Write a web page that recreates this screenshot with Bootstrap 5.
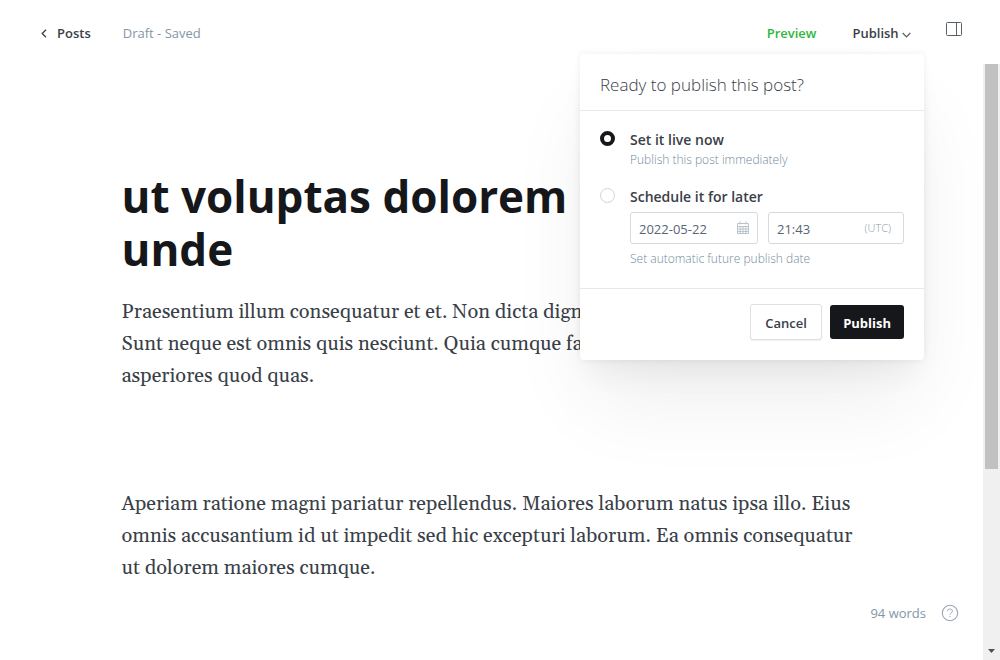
<!DOCTYPE html>
<html lang="en">
<head>
<meta charset="utf-8">
<meta name="viewport" content="width=device-width, initial-scale=1">
<title>Post editor</title>
<link rel="stylesheet" href="https://cdn.jsdelivr.net/npm/bootstrap@5.3.0/dist/css/bootstrap.min.css">
<style>
:root { --ink: #15171a; --text: #394047; --muted: #8496a7; --line: #e5e9ed; }
body { font-family: "Open Sans", "Noto Sans", sans-serif; font-size: 13px; line-height: 20px; color: var(--text); background: #fff; }
.editor-head { height: 64px; padding: 2px 38px 0 41px; }
.editor-head > a, .publish-toggle { font-size: 13px; line-height: 20px; font-weight: 600; color: var(--text); text-decoration: none; border: 0; }
.editor-head > .preview-link { color: #2db83d; }
.muted-text { color: var(--muted); }
.back-icon { width: 6px; height: 9px; }
.back-link { gap: 10px; }
.draft-state { margin-left: 32px; }
.publish-toggle { padding: 4px 13px 4px 36px; }
.sidebar-toggle { padding: 0 0 9px 22px; line-height: 0; border: 0; }
.publish-menu { top: 35px; right: 0; width: 344px; z-index: 10; padding: 0; border: 0; border-radius: 4px; color: var(--text);
  box-shadow: 0 0 7px rgba(0,0,0,.07), 0 20px 28px -8px rgba(0,0,0,.05), 0 50px 80px -10px rgba(0,0,0,.07); }
.menu-title { font-size: 17px; line-height: 24px; font-weight: 300; padding: 19px 20px 13px; margin: 0; border-bottom: 1px solid var(--line); }
.menu-body { padding: 18px 20px 19px; }
.menu-foot { padding: 15px 20px 20px; border-top: 1px solid var(--line); }
.option { gap: 15px; }
.option input[type=radio] { appearance: none; flex: none; width: 15px; height: 15px; margin: 2px 0 0; border: 1px solid #ced4da; border-radius: 50%; background: #fff; }
.option input[type=radio]:checked { border: 4px solid var(--ink); }
.option label { font-size: 14px; line-height: 21px; font-weight: 600; display: block; }
.hint { font-size: 12px; font-weight: 300; color: #738a9c; }
.schedule { margin: 5px 0; gap: 10px; }
.field-box { height: 32px; border: 1px solid #d5dade; border-radius: 3px; padding: 0 8px; }
.field-date { width: 128px; }
.field-time { flex: 1; }
.field-box input { width: 100%; min-width: 0; border: 0; padding: 2px 0 0; font-size: 13px; color: #586574; outline: 0; background: transparent; }
.zone { font-size: 11px; font-weight: 300; color: #8f9ba7; margin: 0 4px; }
.menu-foot .btn { font-size: 13px; line-height: 20px; font-weight: 600; border-radius: 3px; }
.menu-foot .btn-cancel { height: 36px; min-width: 72px; padding: 1px 14px 0; border: 1px solid #dde1e5; color: var(--text); background: #fff; box-shadow: 0 1px 1px rgba(0,0,0,.06); }
.menu-foot .btn-publish { height: 34px; padding: 1px 13px 0; border: 0; color: #fff; background: var(--ink); font-weight: 700; }
.canvas-col { padding: 106px 40px 0; min-width: 0; }
.post { max-width: 740px; margin: 0 auto; }
.post h1 { font-size: 44px; line-height: 53px; font-weight: 700; color: var(--ink); margin: 0 0 20px; }
.post p { font-family: Gelasio, "Liberation Serif", serif; font-size: 20px; line-height: 32px; margin: 0 0 96px; }
.status { right: 24px; bottom: 37px; gap: 15px; }
.scroll-track { width: 17px; background: #f0f0f0; }
.scroll-thumb { width: 13px; height: 68%; background: #c1c1c1; }
.scroll-arrow { width: 7px; height: 4px; margin-bottom: 7px; }
</style>
</head>
<body class="vh-100 d-flex flex-column overflow-hidden">
<header class="editor-head d-flex align-items-center flex-shrink-0">
  <a href="#" class="back-link d-flex align-items-center"><svg class="back-icon" viewBox="0 0 6 9" fill="none" stroke="#394047" stroke-width="1.3"><path d="M5 .7 1.2 4.5 5 8.3"/></svg>Posts</a>
  <span class="draft-state muted-text">Draft - Saved</span>
  <a href="#" class="preview-link ms-auto">Preview</a>
  <div class="position-relative">
    <button type="button" class="btn publish-toggle" aria-expanded="true">Publish <svg width="9" height="6" viewBox="0 0 9 6" fill="none" stroke="#596066" stroke-width="1.2"><path d="M.7 1 4.5 4.9 8.3 1"/></svg></button>
    <form class="publish-menu card position-absolute">
      <h2 class="menu-title">Ready to publish this post?</h2>
      <div class="menu-body">
        <div class="option d-flex mb-3">
          <input type="radio" name="when" id="now" checked>
          <div><label for="now">Set it live now</label><div class="hint">Publish this post immediately</div></div>
        </div>
        <div class="option d-flex">
          <input type="radio" name="when" id="later">
          <div class="flex-grow-1">
            <label for="later">Schedule it for later</label>
            <div class="schedule d-flex">
              <div class="field-box field-date d-flex align-items-center">
                <input type="text" value="2022-05-22" aria-label="Publish date">
                <svg class="flex-shrink-0" width="12" height="14" viewBox="0 0 12 14" fill="none" stroke="#b9c4ce"><path d="M.5 2.5h11v10H.5zM.5 5.5h11M.5 8h11M.5 10.5h11M3.2 5v8M6 5v8M8.8 5v8M3 .5v3M9 .5v3"/></svg>
              </div>
              <div class="field-box field-time d-flex align-items-center">
                <input type="text" value="21:43" aria-label="Publish time"><span class="zone">(UTC)</span>
              </div>
            </div>
            <div class="hint">Set automatic future publish date</div>
          </div>
        </div>
      </div>
      <div class="menu-foot d-flex justify-content-end align-items-center gap-2">
        <button type="button" class="btn btn-cancel">Cancel</button>
        <button type="submit" class="btn btn-publish">Publish</button>
      </div>
    </form>
  </div>
  <button type="button" class="btn sidebar-toggle" aria-label="Settings"><svg width="16" height="14" viewBox="0 0 16 14" fill="none" stroke="#596066"><rect x=".5" y=".5" width="15" height="13" rx="1"/><path d="M10.5.5v13M12.5.5"/></svg></button>
</header>
<div class="d-flex flex-grow-1 overflow-hidden">
  <main class="canvas-col flex-grow-1 position-relative">
    <article class="post">
      <h1>ut voluptas dolorem inventore unde</h1>
      <p>Praesentium illum consequatur et et. Non dicta dignissimos perspiciatis nostrum. Sunt neque est omnis quis nesciunt. Quia cumque facere voluptatem dolorum asperiores quod quas.</p>
      <p>Aperiam ratione magni pariatur repellendus. Maiores laborum natus ipsa illo. Eius omnis accusantium id ut impedit sed hic excepturi laborum. Ea omnis consequatur ut dolorem maiores cumque.</p>
    </article>
    <div class="status position-absolute d-flex align-items-center muted-text">
      <span>94 words</span>
      <a href="#" class="d-flex" aria-label="Help"><svg width="18" height="18" viewBox="0 0 18 18" fill="none" stroke="#9aa7b5"><circle cx="9" cy="9" r="7.7" stroke-width="1.1"/><path d="M6.6 7.2C6.6 5.8 7.6 5 9 5s2.4.9 2.4 2.1C11.4 8.8 9 8.8 9 10.7M9 12v1.2"/></svg></a>
    </div>
  </main>
  <div class="scroll-track d-flex flex-column align-items-center justify-content-between flex-shrink-0" aria-hidden="true">
    <div class="scroll-thumb"></div>
    <svg class="scroll-arrow" viewBox="0 0 7 4"><path d="M0 0h7L3.5 4z" fill="#505050"/></svg>
  </div>
</div>
<script src="https://cdn.jsdelivr.net/npm/bootstrap@5.3.0/dist/js/bootstrap.bundle.min.js"></script>
</body>
</html>
